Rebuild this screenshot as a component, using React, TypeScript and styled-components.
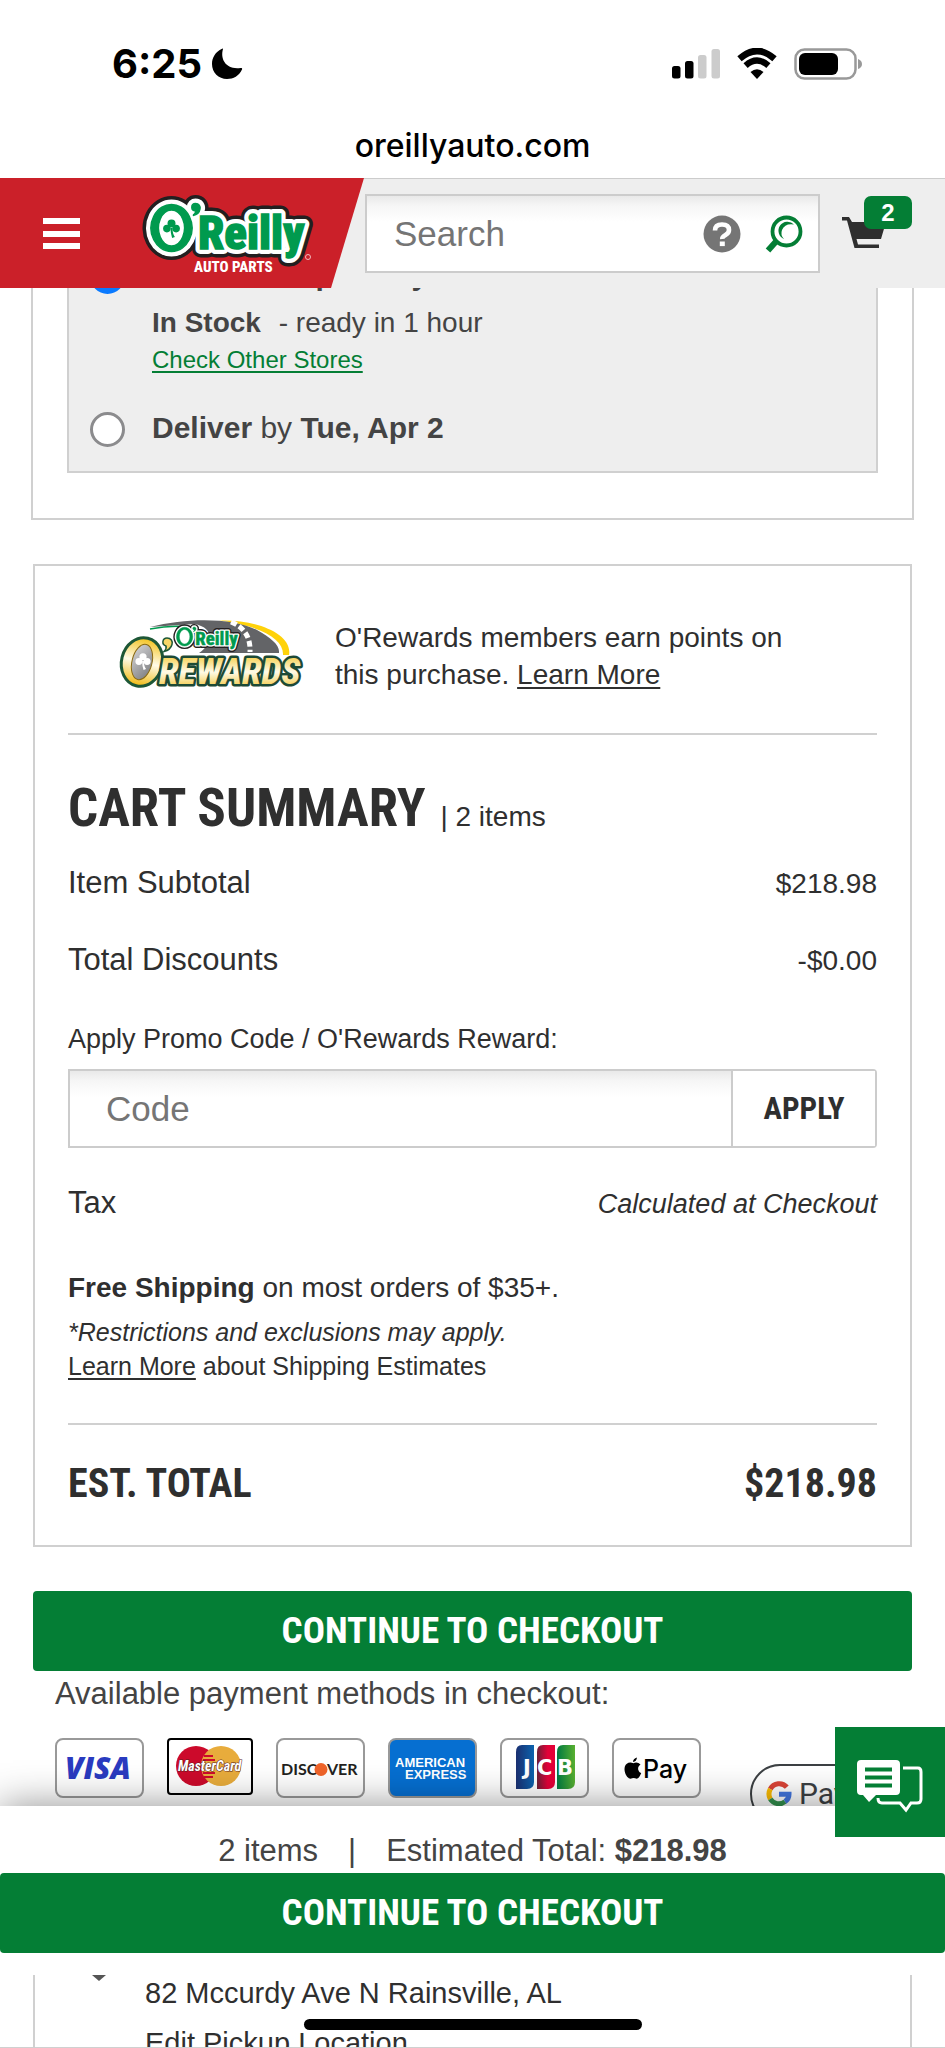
import React from 'react';
import styled, { createGlobalStyle } from 'styled-components';

const sans = '"Liberation Sans", Arial, sans-serif';
const condensed = '"Roboto Condensed", "Liberation Sans Narrow", Roboto, sans-serif';
const system = 'Inter, "Liberation Sans", sans-serif';
const green = '#047e35';
const ink = '#2f2f2f';
const line = '#d0d0d0';

const Global = createGlobalStyle`
  * { box-sizing: border-box; }
  body { margin: 0; background: #fff; color: ${ink}; font-family: ${sans}; }
  button, input { font-family: inherit; margin: 0; }
  p, h1, h2 { margin: 0; }
`;

const Page = styled.div`
  position: relative;
  display: flex;
  flex-direction: column;
  height: 100vh;
  overflow: hidden;
  border-bottom: 1px solid ${line};
  & > * { flex-shrink: 0; }
`;

/* ---------- phone status ---------- */
const StatusBar = styled.div`
  display: flex;
  align-items: center;
  justify-content: space-between;
  height: 128px;
  padding: 0 83px 0 112px;
`;
const Clock = styled.div`
  display: flex;
  align-items: center;
  gap: 9px;
  font: 700 40px/48px ${system};
  color: #000;
`;
const Signals = styled.div`
  display: flex;
  align-items: center;
  gap: 16px;
`;
const Address = styled.div`
  height: 50px;
  text-align: center;
  font: 500 32px/36px ${system};
  color: #000;
`;

/* ---------- header ---------- */
const Header = styled.header`
  position: relative;
  z-index: 2;
  display: flex;
  align-items: center;
  height: 110px;
  background: #eee;
  border-top: 1px solid #ccc;
`;
const Brand = styled.div`
  display: flex;
  flex: none;
  align-items: center;
  gap: 60px;
  width: 364px;
  height: 110px;
  margin-top: -1px;
  padding-left: 43px;
  background: #cb2029;
  clip-path: polygon(0 0, 100% 0, 331px 100%, 0 100%);
`;
const IconButton = styled.button`
  display: flex;
  flex: none;
  padding: 0;
  border: 0;
  background: none;
  cursor: pointer;
`;
const SearchBox = styled.form`
  display: flex;
  align-items: center;
  gap: 24px;
  flex: 1;
  min-width: 0;
  height: 79px;
  padding: 0 15px 0 0;
  margin-left: 1px;
  border: 2px solid #ccc;
  background: linear-gradient(#e9e9e9, #f6f6f6 10px, #fff 26px);
`;
const SearchInput = styled.input`
  flex: 1;
  min-width: 0;
  height: 75px;
  padding: 0 0 0 27px;
  border: 0;
  outline: 0;
  background: none;
  font-size: 35px;
  color: ${ink};
  &::placeholder { color: #757575; opacity: 1; }
`;
const CartLink = styled.a`
  position: relative;
  display: block;
  flex: none;
  width: 125px;
  height: 110px;
  padding: 38px 0 0 22px;
`;
const CartCount = styled.span`
  position: absolute;
  top: 17px;
  left: 44px;
  width: 48px;
  border-radius: 7px;
  background: ${green};
  color: #fff;
  text-align: center;
  font: 700 24px/33px ${sans};
`;

/* ---------- pickup options ---------- */
const OptionsCard = styled.section`
  margin: -40px 31px 0;
  padding: 0 34px 45px;
  border: 2px solid ${line};
  border-top: 0;
`;
const Options = styled.div`
  display: flex;
  flex-direction: column;
  gap: 31px;
  padding: 7px 21px 23px;
  border: 2px solid ${line};
  border-top: 0;
  background: #eee;
  color: #444;
`;
const Option = styled.div`
  display: flex;
  align-items: flex-start;
  gap: 27px;
`;
const Radio = styled.input`
  appearance: none;
  width: 35px;
  height: 35px;
  margin: 4px 0 0;
  border: 3px solid #8b8b8d;
  border-radius: 50%;
  background: #fff;
  &:checked { border: 9px solid #0a7aff; }
`;
const OptionLabel = styled.label`
  display: block;
  font-size: 30px;
  line-height: 40px;
`;
const Stock = styled.p`
  margin-top: 10px;
  font-size: 28px;
  line-height: 36px;
  & > b { margin-right: 10px; }
`;
const StoreLine = styled.p`
  margin-top: 2px;
  font-size: 24px;
  line-height: 34px;
`;
const TextLink = styled.a<{ $tone?: string }>`
  color: ${(p) => p.$tone || ink};
  text-decoration: underline;
  text-decoration-thickness: 2px;
  text-underline-offset: 3px;
`;

/* ---------- cart summary ---------- */
const SummaryCard = styled.section`
  margin: 44px 33px 0;
  padding: 0 33px 37px;
  border: 2px solid ${line};
`;
const RewardsRow = styled.div`
  display: flex;
  align-items: flex-start;
  gap: 29px;
  padding: 53px 0 40px 48px;
  border-bottom: 2px solid ${line};
  font-size: 28px;
  line-height: 37px;
`;
const RewardsText = styled.p`
  max-width: 470px;
`;
const TitleRow = styled.div`
  display: flex;
  align-items: baseline;
  gap: 15px;
  height: 60px;
  margin-top: 43px;
`;
const Title = styled.h1`
  font: 700 53px/60px ${condensed};
`;
const Count = styled.span`
  font-size: 28px;
`;
const Row = styled.div<{ $gap: number }>`
  display: flex;
  justify-content: space-between;
  align-items: baseline;
  height: 40px;
  margin-top: ${(p) => p.$gap}px;
  font-size: 31px;
  line-height: 40px;
`;
const Amount = styled.span`
  font-size: 28px;
`;
const Pending = styled.em`
  font-size: 27px;
`;
const PromoLabel = styled.label`
  display: block;
  margin: 43px 0 14px;
  font-size: 27px;
  line-height: 32px;
`;
const PromoForm = styled.form`
  display: flex;
  height: 79px;
  border: 2px solid #ccc;
  border-radius: 0 4px 4px 0;
`;
const PromoInput = styled.input`
  flex: 1;
  min-width: 0;
  padding: 0 0 0 36px;
  border: 0;
  outline: 0;
  background: linear-gradient(#e9e9e9, #f6f6f6 10px, #fff 26px);
  font-size: 35px;
  color: ${ink};
  &::placeholder { color: #757575; opacity: 1; }
`;
const ApplyButton = styled.button`
  width: 144px;
  padding: 0;
  border: 0;
  border-left: 2px solid #ccc;
  background: #fff;
  color: ${ink};
  && { font: 700 31px/40px ${condensed}; }
`;
const Shipping = styled.p`
  margin: 47px 0 9px;
  font-size: 28px;
  line-height: 36px;
`;
const FinePrint = styled.p`
  font-size: 25px;
  line-height: 34px;
`;
const TotalRow = styled.div`
  display: flex;
  justify-content: space-between;
  margin-top: 40px;
  padding-top: 35px;
  border-top: 2px solid ${line};
  font: 700 40px/48px ${condensed};
`;
const CheckoutButton = styled.button<{ $full?: boolean }>`
  display: block;
  width: ${(p) => (p.$full ? '100%' : 'auto')};
  margin: ${(p) => (p.$full ? '3px 0 0' : '44px 33px 0')};
  height: 80px;
  padding: 0;
  border: 0;
  border-radius: 4px;
  background: ${green};
  color: #fff;
  cursor: pointer;
  && { font: 700 37px/48px ${condensed}; }
`;

/* ---------- payment methods ---------- */
const PaymentLabel = styled.p`
  margin: 4px 55px 25px;
  font-size: 31px;
  line-height: 38px;
  color: #444;
`;
const Methods = styled.div`
  display: flex;
  align-items: flex-start;
  gap: 23px;
  margin-left: 55px;
`;
const Method = styled.div<{ $fill?: string; $black?: boolean }>`
  flex: none;
  width: ${(p) => (p.$black ? 86 : 89)}px;
  height: ${(p) => (p.$black ? 57 : 60)}px;
  border: 2px solid ${(p) => (p.$black ? '#000' : '#999')};
  border-radius: ${(p) => (p.$black ? 4 : 8)}px;
  background: ${(p) => p.$fill || '#fff'};
  overflow: hidden;
  & > svg { display: block; width: 100%; height: 100%; }
`;
const GooglePay = styled.div`
  display: flex;
  flex: none;
  align-items: center;
  gap: 7px;
  width: 150px;
  height: 60px;
  margin: 26px 0 0 26px;
  padding-left: 14px;
  border: 2px solid #3c4043;
  border-radius: 30px;
  background: #fff;
  color: #3c4043;
  font: 400 30px/36px Roboto, sans-serif;
`;

/* ---------- sticky total ---------- */
const TotalBar = styled.div`
  position: relative;
  z-index: 2;
  margin-top: -18px;
  padding: 26px 0 22px;
  background: #fff;
  box-shadow: 0 0 38px rgba(0, 0, 0, 0.44);
`;
const TotalText = styled.p`
  text-align: center;
  font-size: 31px;
  line-height: 38px;
  color: #444;
  & > i { margin: 0 30px; font-style: normal; }
`;
const ChatButton = styled.button`
  position: absolute;
  top: -79px;
  right: 0;
  width: 110px;
  height: 110px;
  padding: 0;
  border: 0;
  background: ${green};
`;
const StoreCard = styled.section`
  position: relative;
  z-index: 3;
  background: #fff;
  padding: 0 33px;
`;
const StoreBody = styled.div`
  display: grid;
  grid-template-columns: 53px 1fr;
  padding-left: 57px;
  border: solid ${line};
  border-width: 0 2px;
  font-size: 29px;
  line-height: 36px;
`;
const EditLine = styled.p`
  margin-top: 14px;
`;
const HomeIndicator = styled.div`
  position: absolute;
  z-index: 4;
  bottom: 17px;
  left: 50%;
  width: 338px;
  height: 11px;
  margin-left: -169px;
  border-radius: 6px;
  background: #000;
`;

const Shamrock = ({ x, y, s, fill }: { x: number; y: number; s: number; fill: string }) => (
  <g transform={`translate(${x} ${y}) scale(${s})`} fill={fill}>
    <circle cx="0" cy="-4.6" r="4" />
    <circle cx="-4.6" cy="0.6" r="3.8" />
    <circle cx="4.6" cy="0.6" r="3.8" />
    <path d="M-1 0 L1 0 Q1 6 3.4 9 L0.6 10 Q-1 5 -1 0Z" />
  </g>
);

const OReillyShape = () => (
  <>
    <path d="M171.500 204.500a20.500 23.500 0 1 0 0.010 0zM171.500 210a13 18 0 1 1 -0.010 0z" fillRule="evenodd" />
    <path d="M195.500 203.500c3.500 0 5 2.500 4.500 5.500c-.6 4-3.500 6-7 6.500c2-1.500 3-3 2.600-4.600c-2 0-3.800-1.400-3.800-3.600c0-2.300 1.700-3.800 3.700-3.800z" />
    <text x="198" y="249" fontFamily={condensed} fontWeight="800" fontSize="47">Reilly</text>
  </>
);

const OReillyLogo = () => (
  <svg width="178" height="84" viewBox="140 191 178 84" role="img" aria-label="O'Reilly Auto Parts">
    <g fill="#231f20" stroke="#231f20" strokeWidth="17" strokeLinejoin="round"><OReillyShape /></g>
    <g fill="#fff" stroke="#fff" strokeWidth="10" strokeLinejoin="round"><OReillyShape /><ellipse cx="171.500" cy="228" rx="14" ry="18" /></g>
    <g fill="#009a4e" stroke="#009a4e" strokeWidth="1.500"><OReillyShape /></g>
    <Shamrock x={171.500} y={228} s={1} fill="#009a4e" />
    <text x="194" y="272" fontFamily={condensed} fontWeight="800" fontSize="15" fill="#fff">AUTO PARTS</text>
    <circle cx="308" cy="257" r="2.500" fill="none" stroke="#f2b9bb" />
  </svg>
);

const RewardsLogo = () => (
  <svg width="190" height="74" viewBox="117 616 190 74" role="img" aria-label="O'Rewards">
    <defs>
      <linearGradient id="gold" x1="0" y1="0" x2="0" y2="1">
        <stop offset="0" stopColor="#f3c21c" /><stop offset=".5" stopColor="#fffbe8" /><stop offset="1" stopColor="#f0b90f" />
      </linearGradient>
      <linearGradient id="silver" x1="0" y1="0" x2="1" y2="1">
        <stop offset="0" stopColor="#d8d8da" /><stop offset="1" stopColor="#77787b" />
      </linearGradient>
    </defs>
    <path d="M220 617.500C255 616 294 630 290 652L284 652C285 636 262 623 220 617.500Z" fill="#ffd20a" />
    <path d="M151 624C190 614 235 615 258 627C272 635 281 642 280 650L200 650C215 640 215 625 196 621Z" fill="#636467" />
    <path d="M232 619Q252 627 251 649" fill="none" stroke="#fff" strokeWidth="5" strokeDasharray="6 3" />
    <path d="M151 626Q172 622 190 624" fill="none" stroke="#009a4e" strokeWidth="1.500" />
    <g transform="translate(117 542.500) scale(.4)">
      <g fill="#231f20" stroke="#231f20" strokeWidth="15" strokeLinejoin="round"><OReillyShape /></g>
      <g fill="#fff" stroke="#fff" strokeWidth="8" strokeLinejoin="round"><OReillyShape /><ellipse cx="171.500" cy="228" rx="14" ry="18" /></g>
      <g fill="#009a4e" stroke="#009a4e" strokeWidth="1"><OReillyShape /></g>
    </g>
    <g transform="rotate(14 143 659)">
      <ellipse cx="143" cy="659" rx="20.500" ry="24.500" fill="url(#gold)" stroke="#1d5736" strokeWidth="3" />
      <ellipse cx="143" cy="659" rx="10" ry="18" fill="url(#silver)" stroke="#8a6a12" strokeWidth="1" />
    </g>
    <path d="M168 635c4 0 6 3 5 6.500c-1 4-4 6-8 7c2-2 2.500-4 2-5.500c-5-1.500-3.500-8 1-8z" fill="#f6d668" stroke="#1d5736" strokeWidth="1.500" />
    <Shamrock x={144} y={658} s={0.9} fill="#fff" />
    <text x="160" y="681" fontFamily={condensed} fontStyle="italic" fontWeight="800" fontSize="36" fill="url(#gold)" stroke="#1d4a36" strokeWidth="5" strokeLinejoin="round" paintOrder="stroke">REWARDS</text>
  </svg>
);

const Chat = () => (
  <svg width="110" height="110" viewBox="835 1727 110 110" aria-hidden="true">
    <path d="M861 1760h35a4 4 0 0 1 4 4v27a4 4 0 0 1-4 4h-20l-7 7l-6-7h-2a4 4 0 0 1-4-4v-27a4 4 0 0 1 4-4z" fill="#fff" />
    <path d="M865 1769.500h27M865 1777.500h27M865 1785.500h27" stroke={green} strokeWidth="4" />
    <path d="M903 1768h15q3 0 3 4v27q0 4-4 4h-6l-5 7l-6-7h-18q-4 0-4-5" fill="none" stroke="#fff" strokeWidth="3" />
  </svg>
);

export default function App() {
  return (
    <Page>
      <Global />
      <StatusBar>
        <Clock>
          6:25
          <svg width="32" height="32" viewBox="0 0 32 32" aria-hidden="true">
            <path d="M12 1C9 11 15 22 29.500 20C31 19.800 31.500 20.500 31 21.500C28 28 22.500 31 16 31C7.500 31 1 24.500 1 16C1 9.500 4.500 4 10.500 1C11.500 .4 12.300 .2 12 1Z" />
          </svg>
        </Clock>
        <Signals>
          <svg width="48" height="32" viewBox="0 0 48 32" aria-hidden="true">
            <rect x="0" y="18" width="8.500" height="12.500" rx="2.500" />
            <rect x="13" y="13" width="8.500" height="17.500" rx="2.500" />
            <rect x="26" y="7" width="8.500" height="23.500" rx="2.500" fill="#ccc" />
            <rect x="39.500" y="1" width="8.500" height="29.500" rx="2.500" fill="#ccc" />
          </svg>
          <svg width="42" height="32" viewBox="0 0 42 32" aria-hidden="true">
            <path d="M3.500 10.800Q21-4.800 38.500 10.800" fill="none" stroke="#000" strokeWidth="6.500" />
            <path d="M9.600 17.600Q21 7.500 32.400 17.600" fill="none" stroke="#000" strokeWidth="6.300" />
            <path d="M21 31L14.500 24Q21 18.500 27.500 24Z" />
          </svg>
          <svg width="68" height="32" viewBox="0 0 68 32" aria-hidden="true">
            <rect x="1.500" y="1.500" width="60" height="29" rx="9" fill="none" stroke="#999" strokeWidth="2.500" />
            <rect x="5" y="5" width="39" height="22" rx="6" />
            <path d="M64 11q4 1.500 4 5t-4 5z" fill="#999" />
          </svg>
        </Signals>
      </StatusBar>
      <Address>oreillyauto.com</Address>

      <Header>
        <Brand>
          <IconButton type="button" aria-label="Menu">
            <svg width="37" height="31" viewBox="0 0 37 31" fill="#fff">
              <rect width="37" height="6" /><rect y="13" width="37" height="6" /><rect y="25" width="37" height="6" />
            </svg>
          </IconButton>
          <OReillyLogo />
        </Brand>
        <SearchBox>
          <SearchInput aria-label="Search" placeholder="Search" />
          <IconButton type="button" aria-label="Help">
            <svg width="38" height="38" viewBox="0 0 38 38">
              <circle cx="19" cy="19" r="18.500" fill="#757575" />
              <path d="M12 15.500Q12 9.500 19 9.500T26 15Q26 18 22.500 20T19.300 24" fill="none" stroke="#fff" strokeWidth="4.600" />
              <rect x="16.800" y="26.500" width="5" height="4.600" fill="#fff" />
            </svg>
          </IconButton>
          <IconButton type="submit" aria-label="Submit search">
            <svg width="38" height="38" viewBox="0 0 38 38" fill="none" stroke={green}>
              <circle cx="21.500" cy="16.500" r="14" strokeWidth="3.800" />
              <path d="M29 9.500A9 9 0 1 0 19 24A8.500 8.500 0 0 1 17 15Q20 8 29 9.500Z" fill={green} stroke="none" />
              <path d="M11 26.500L3 35.500" strokeWidth="6" />
            </svg>
          </IconButton>
        </SearchBox>
        <CartLink href="#cart" aria-label="Cart">
          <svg width="44" height="32" viewBox="0 0 44 32">
            <path d="M0 0h7l3 5h34l-5 17H14.500l1.500 5.500h21v3.500H12.500L5 3.500H0z" fill="#2f2f2f" />
            <path d="M15.800 24h22" stroke="#eee" strokeWidth="1" />
          </svg>
          <CartCount>2</CartCount>
        </CartLink>
      </Header>

      <OptionsCard>
        <Options>
          <Option>
            <Radio type="radio" name="method" id="pickup" defaultChecked />
            <div>
              <OptionLabel htmlFor="pickup"><b>Free Pick Up Today</b></OptionLabel>
              <Stock><b>In Stock</b> - ready in 1 hour</Stock>
              <StoreLine><TextLink href="#stores" $tone={green}>Check Other Stores</TextLink></StoreLine>
            </div>
          </Option>
          <Option>
            <Radio type="radio" name="method" id="deliver" />
            <OptionLabel htmlFor="deliver"><b>Deliver</b> by <b>Tue, Apr 2</b></OptionLabel>
          </Option>
        </Options>
      </OptionsCard>

      <SummaryCard>
        <RewardsRow>
          <RewardsLogo />
          <RewardsText>O'Rewards members earn points on this purchase. <TextLink href="#rewards">Learn More</TextLink></RewardsText>
        </RewardsRow>
        <TitleRow><Title>CART SUMMARY</Title><Count>| 2 items</Count></TitleRow>
        <Row $gap={25}><span>Item Subtotal</span><Amount>$218.98</Amount></Row>
        <Row $gap={37}><span>Total Discounts</span><Amount>-$0.00</Amount></Row>
        <PromoLabel htmlFor="promo">Apply Promo Code / O'Rewards Reward:</PromoLabel>
        <PromoForm>
          <PromoInput id="promo" placeholder="Code" />
          <ApplyButton type="button">APPLY</ApplyButton>
        </PromoForm>
        <Row $gap={35}><span>Tax</span><Pending>Calculated at Checkout</Pending></Row>
        <Shipping><b>Free Shipping</b> on most orders of $35+.</Shipping>
        <FinePrint><em>*Restrictions and exclusions may apply.</em></FinePrint>
        <FinePrint><TextLink href="#shipping">Learn More</TextLink> about Shipping Estimates</FinePrint>
        <TotalRow><span>EST. TOTAL</span><span>$218.98</span></TotalRow>
      </SummaryCard>

      <CheckoutButton type="button">CONTINUE TO CHECKOUT</CheckoutButton>
      <PaymentLabel>Available payment methods in checkout:</PaymentLabel>
      <Methods>
        <Method>
          <svg viewBox="0 0 85 56"><text x="8" y="39" fontFamily='"Open Sans", sans-serif' fontStyle="italic" fontWeight="800" fontSize="30" fill="#2a3bc0">VISA</text></svg>
        </Method>
        <Method $black>
          <svg viewBox="0 0 82 53">
            <circle cx="27" cy="26" r="20" fill="#cc0a2b" /><circle cx="52" cy="26" r="20" fill="#e8ac3c" />
            <path d="M35 16h9M34 20h12M34 33h12M35 37h9" stroke="#cc0a2b" strokeWidth="2" />
            <text x="9" y="31" fontFamily={condensed} fontStyle="italic" fontWeight="700" fontSize="14" fill="#fff" stroke="#5a2020" strokeWidth="1" paintOrder="stroke">MasterCard</text>
          </svg>
        </Method>
        <Method>
          <svg viewBox="0 0 85 56" fontFamily="Lato, sans-serif" fontWeight="700" fontSize="16" fill="#231f20">
            <text x="3" y="35">DISC</text><circle cx="43" cy="29.500" r="6.500" fill="#f0642a" /><text x="49" y="35">VER</text>
          </svg>
        </Method>
        <Method $fill="#066fd1">
          <svg viewBox="0 0 85 56" fontFamily={sans} fontWeight="700" fontSize="13" fill="#fff">
            <text x="5" y="27">AMERICAN</text><text x="15" y="39">EXPRESS</text>
          </svg>
        </Method>
        <Method>
          <svg viewBox="0 0 85 56">
            <defs>
              <linearGradient id="jb"><stop stopColor="#1b2f70" /><stop offset="1" stopColor="#0b63ae" /></linearGradient>
              <linearGradient id="jr"><stop stopColor="#6d2037" /><stop offset=".6" stopColor="#e30138" /></linearGradient>
              <linearGradient id="jg"><stop stopColor="#007a41" /><stop offset="1" stopColor="#59b030" /></linearGradient>
            </defs>
            <path d="M20 5h12v37q0 7-7 7H14V12q0-7 6-7z" fill="url(#jb)" />
            <path d="M41 5h12v37q0 7-7 7H35V12q0-7 6-7z" fill="url(#jr)" />
            <path d="M61 5h12v37q0 7-7 7H55V12q0-7 6-7z" fill="url(#jg)" />
            <g fontFamily='"DejaVu Sans", sans-serif' fontWeight="700" fontSize="21" fill="#fff">
              <text x="21" y="35">J</text><text x="35" y="35">C</text><text x="55" y="35">B</text>
            </g>
          </svg>
        </Method>
        <Method>
          <svg viewBox="0 0 85 56">
            <path d="M23 17.500q-.5 4-4 4.500q0-3.500 4-4.500zM19.300 23.200q4-2 7.200 1.300q-4 3-1.500 7q.8 1 2.200 1.600q-2 5.500-4.600 5.600q-1.400-.8-3-.8t-3 .8C12 38.500 8 28 12.500 24q3-2.300 6.800-.8z" />
            <text x="29" y="38" fontFamily={system} fontWeight="500" fontSize="25">Pay</text>
          </svg>
        </Method>
        <GooglePay>
          <svg width="26" height="26" viewBox="0 0 26 26" fill="none" strokeWidth="5" aria-hidden="true">
            <path d="M20.800 6.200A10 10 0 0 0 4.300 8" stroke="#db4437" />
            <path d="M4.300 8A10.500 10.500 0 0 0 4.300 18" stroke="#fbbc04" />
            <path d="M4.300 18A10 10 0 0 0 19 20.600" stroke="#34934f" />
            <path d="M13 13.300H23Q23 18 19 20.600" stroke="#4175df" />
          </svg>
          Pay
        </GooglePay>
      </Methods>

      <TotalBar>
        <TotalText>2 items<i>|</i>Estimated Total: <b>$218.98</b></TotalText>
        <CheckoutButton type="button" $full>CONTINUE TO CHECKOUT</CheckoutButton>
        <ChatButton type="button" aria-label="Chat"><Chat /></ChatButton>
      </TotalBar>

      <StoreCard>
        <StoreBody>
          <svg width="14" height="6" viewBox="0 0 14 6" aria-hidden="true"><path d="M0 0h14L7 6z" fill="#555" /></svg>
          <div>
            <p>82 Mccurdy Ave N Rainsville, AL</p>
            <EditLine>Edit Pickup Location</EditLine>
          </div>
        </StoreBody>
      </StoreCard>
      <HomeIndicator />
    </Page>
  );
}
